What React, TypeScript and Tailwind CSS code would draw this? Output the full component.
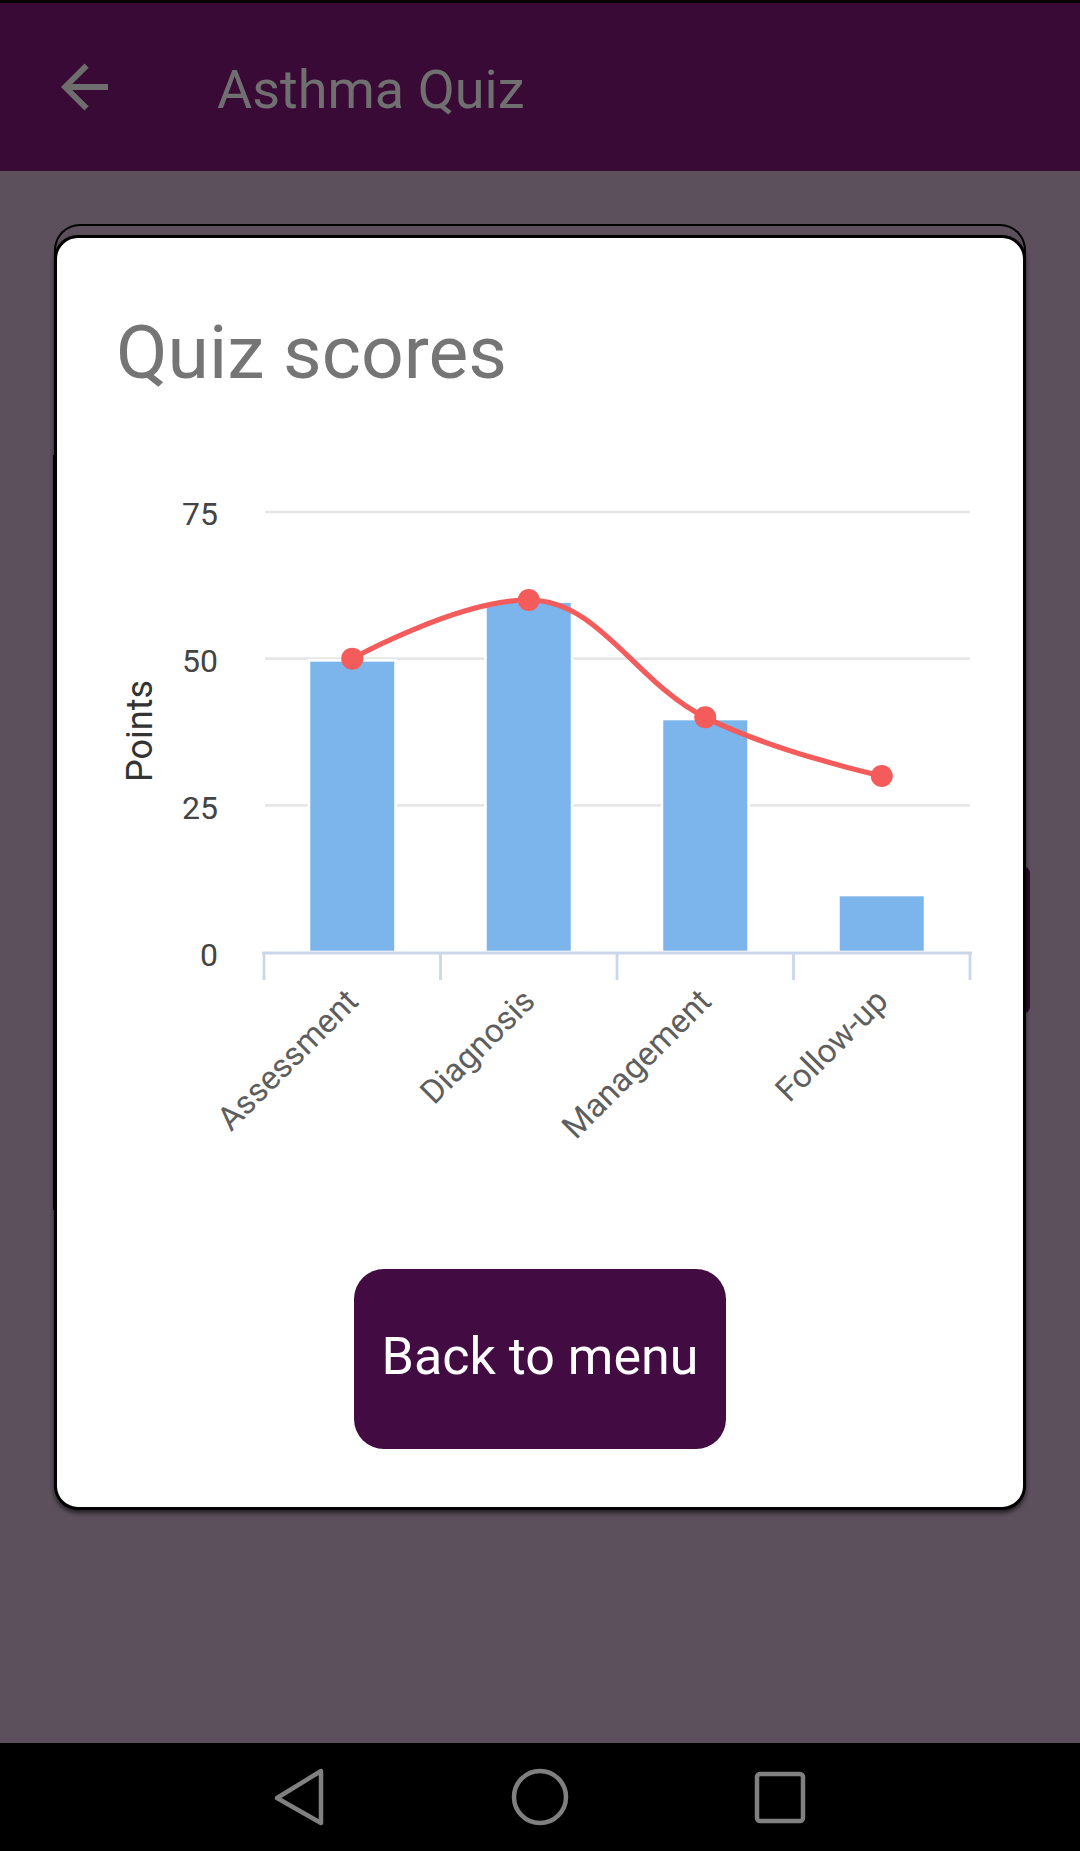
import React from "react";

const FONT = { fontFamily: "Roboto, 'Noto Sans', Arial, sans-serif" };

const Y0 = 952;
const PER = 5.867;
const yv = (v: number) => Y0 - v * PER;
const cats = ["Assessment", "Diagnosis", "Management", "Follow-up"];
const centers = [352.25, 528.75, 705.25, 881.75];
const bars = [50, 60, 40, 10];
const line = [50, 60, 40, 30];
const ticks = [264, 440.5, 617, 793.5, 970];

function splinePath(pts: [number, number][]) {
  const sm = 1.5;
  const den = 2.5;
  const ctrl = pts.map((p, i) => {
    if (i === 0 || i === pts.length - 1) return null;
    const [x, y] = p;
    const [lx, ly] = pts[i - 1];
    const [nx, ny] = pts[i + 1];
    const lcx = (sm * x + lx) / den;
    let lcy = (sm * y + ly) / den;
    const rcx = (sm * x + nx) / den;
    let rcy = (sm * y + ny) / den;
    const corr = ((rcy - lcy) * (rcx - x)) / (rcx - lcx) + y - rcy;
    lcy += corr;
    rcy += corr;
    if (lcy > ly && lcy > y) {
      lcy = Math.max(ly, y);
      rcy = 2 * y - lcy;
    } else if (lcy < ly && lcy < y) {
      lcy = Math.min(ly, y);
      rcy = 2 * y - lcy;
    }
    if (rcy > ny && rcy > y) {
      rcy = Math.max(ny, y);
      lcy = 2 * y - rcy;
    } else if (rcy < ny && rcy < y) {
      rcy = Math.min(ny, y);
      lcy = 2 * y - rcy;
    }
    return { lcx, lcy, rcx, rcy };
  });
  let d = `M ${pts[0][0]} ${pts[0][1]}`;
  for (let i = 1; i < pts.length; i++) {
    const a = ctrl[i - 1];
    const b = ctrl[i];
    const c1x = a ? a.rcx : pts[i - 1][0];
    const c1y = a ? a.rcy : pts[i - 1][1];
    const c2x = b ? b.lcx : pts[i][0];
    const c2y = b ? b.lcy : pts[i][1];
    d += ` C ${c1x} ${c1y} ${c2x} ${c2y} ${pts[i][0]} ${pts[i][1]}`;
  }
  return d;
}

function Chart() {
  const pts = centers.map((c, i) => [c, yv(line[i])] as [number, number]);
  return (
    <svg
      width={966}
      height={760}
      viewBox="57 400 966 760"
      className="block"
      style={FONT}
    >
      {[25, 50, 75].map((v) => (
        <line key={v} x1={265} x2={970} y1={yv(v)} y2={yv(v)} stroke="#e6e6e6" strokeWidth={2.6} />
      ))}
      {centers.map((c, i) => (
        <rect
          key={i}
          x={c - 43.3}
          y={yv(bars[i]) + 1.7}
          width={86.6}
          height={Y0 - yv(bars[i]) - 1.7}
          fill="#7cb5ec"
          stroke="#ffffff"
          strokeWidth={2.6}
        />
      ))}
      <line x1={262} x2={972} y1={Y0 + 1} y2={Y0 + 1} stroke="#ccd6eb" strokeWidth={2.8} />
      {ticks.map((t, i) => (
        <line key={i} x1={t} x2={t} y1={Y0} y2={980} stroke="#ccd6eb" strokeWidth={2.8} />
      ))}
      <path d={splinePath(pts)} fill="none" stroke="#f45b5b" strokeWidth={5.2} strokeLinecap="round" />
      {pts.map(([x, y], i) => (
        <circle key={i} cx={x} cy={y} r={11} fill="#f45b5b" />
      ))}
      {[0, 25, 50, 75].map((v) => (
        <text key={v} x={218} y={yv(v) + 13.5} textAnchor="end" fontSize={32} fill="#444444">
          {v}
        </text>
      ))}
      <text
        x={152}
        y={731}
        textAnchor="middle"
        fontSize={36}
        fill="#333333"
        transform="rotate(-90 152 731)"
      >
        Points
      </text>
      {cats.map((c, i) => (
        <text
          key={c}
          x={centers[i] + 8}
          y={1003}
          textAnchor="end"
          fontSize={33}
          fill="#5e5e5e"
          transform={`rotate(-45 ${centers[i] + 8} 1003)`}
        >
          {c}
        </text>
      ))}
    </svg>
  );
}

export default function App() {
  return (
    <div className="w-[1080px] h-[1851px] flex flex-col bg-[#5b505c] overflow-hidden" style={FONT}>
      <div className="h-[3px] bg-black" />
      <div className="h-[168px] bg-[#380a35] flex items-center pl-[61px]">
        <svg width={47} height={48} viewBox="4 4 16 16" className="block">
          <path d="M20 11H7.83l5.59-5.59L12 4l-8 8 8 8 1.41-1.41L7.83 13H20v-2z" fill="#6e6e6e" />
        </svg>
        <div className="ml-[109px] mt-[6px] text-[54px] leading-[62px] text-[#707070]">Asthma Quiz</div>
      </div>
      <div className="flex-1 relative">
        <div className="relative mt-[64px] ml-[54px] w-[972px]">
          <div className="absolute left-0 top-[-11px] w-[972px] h-[250px] border-t-2 border-l-2 border-r-2 border-black rounded-t-[26px]" />
          <div className="absolute left-[-1px] top-[220px] w-[3px] h-[755px] bg-black" />
          <div className="absolute left-[970px] top-[632px] w-[6px] h-[146px] bg-[#2a0a2a] rounded-r-[6px]" />
          <div className="relative w-[972px] h-[1275px] bg-white border-[3px] border-black rounded-[24px] shadow-[0_3px_4px_rgba(0,0,0,0.6)] flex flex-col">
            <div className="pt-[71px] pl-[59px] text-[75px] leading-[87px] text-[#757575]">Quiz scores</div>
            <div className="mt-[4px]">
              <Chart />
            </div>
            <div className="mt-[109px] flex justify-center">
              <div className="w-[372px] h-[180px] rounded-[30px] bg-[#420b42] flex items-center justify-center pb-[6px] text-white text-[52px] leading-[61px]">
                Back to menu
              </div>
            </div>
          </div>
        </div>
      </div>
      <div className="h-[108px] bg-black flex items-center justify-center">
        <svg width={1080} height={108} viewBox="0 1743 1080 108" className="block">
          <path
            d="M 321 1771 L 321 1823 L 277 1798 Z"
            fill="none"
            stroke="#808080"
            strokeWidth={4.5}
            strokeLinejoin="round"
          />
          <ellipse cx={540} cy={1797} rx={26} ry={26} fill="none" stroke="#808080" strokeWidth={4.5} />
          <rect x={757} y={1774} width={46} height={47} rx={3} fill="none" stroke="#808080" strokeWidth={4.5} />
        </svg>
      </div>
    </div>
  );
}
